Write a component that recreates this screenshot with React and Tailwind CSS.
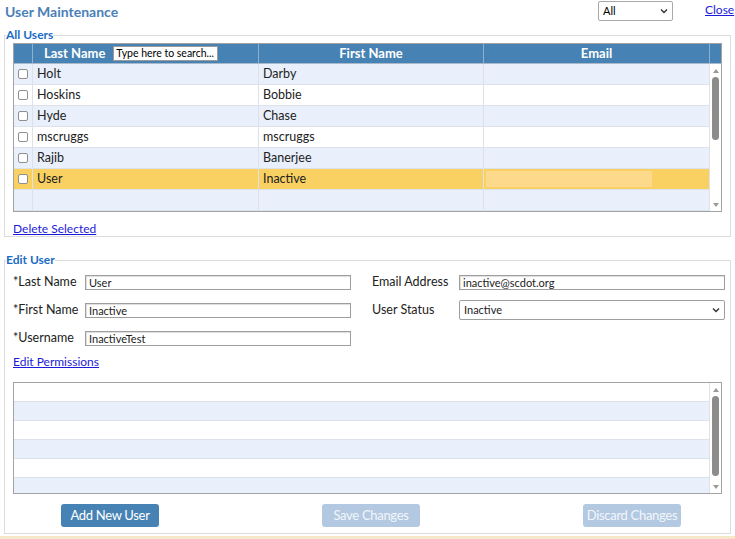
import React from "react";

const users = [
  { last: "Holt", first: "Darby" },
  { last: "Hoskins", first: "Bobbie" },
  { last: "Hyde", first: "Chase" },
  { last: "mscruggs", first: "mscruggs" },
  { last: "Rajib", first: "Banerjee" },
  { last: "User", first: "Inactive", selected: true },
  { last: "", first: "", empty: true },
];

function Scrollbar({ thumbTop, thumbHeight }) {
  return (
    <div className="w-[12px] flex flex-col items-center bg-white border-l border-[#e2e2e2]">
      <svg width="8" height="6" viewBox="0 0 8 6" className="mt-[4px]">
        <path d="M4 1 L7 5 L1 5 Z" fill="#9a9a9a" />
      </svg>
      <div className={`w-[7px] rounded-[4px] bg-[#8c8c8c] ${thumbTop} ${thumbHeight}`} />
      <div className="flex-1" />
      <svg width="8" height="6" viewBox="0 0 8 6" className="mb-[3px]">
        <path d="M1 1 L7 1 L4 5 Z" fill="#9a9a9a" />
      </svg>
    </div>
  );
}

function Checkbox() {
  return <div className="w-[10px] h-[10px] rounded-[2px] border border-[#8f8f8f] bg-white" />;
}

function TextBox({ value }) {
  return (
    <div className="w-[266px] h-[15px] border border-[#9e9e9e] shadow-[inset_1px_1px_1px_#ddd] text-[11px] flex items-center px-[3px] leading-none whitespace-nowrap">
      {value}
    </div>
  );
}

export default function App() {
  return (
    <div className="w-[735px] h-[539px] bg-white relative font-['Lato','Liberation_Sans',sans-serif] text-[#222] overflow-hidden">
      {/* top bar */}
      <div className="flex items-start h-[26px]">
        <h1 className="ml-[5px] mt-[1px] text-[14px] font-bold text-[#4a7fb8]">User Maintenance</h1>
        <div className="flex-1" />
        <div className="mt-[1px] w-[75px] h-[20px] border border-[#a9a9a9] rounded-[2px] flex items-center justify-between px-[4px] text-[11px] text-black bg-white">
          <span>All</span>
          <svg width="8" height="6" viewBox="0 0 8 6"><path d="M1 1.5 L4 4.5 L7 1.5" stroke="#333" strokeWidth="1.4" fill="none" /></svg>
        </div>
        <a href="#" className="ml-[32px] mr-[4px] w-[26px] mt-[1px] text-[12px] text-[#1b1bd8] underline">Close</a>
      </div>

      {/* All Users */}
      <fieldset className="mx-[4px] w-[727px] h-[209px] border border-[#dcdcdc] mt-[2px]">
        <legend className="ml-[1px] text-[12px] font-bold text-[#1a6cc6] leading-[14px]">All Users</legend>
        <div className="ml-[8px] mt-[1px] w-[709px] border border-[#a3a3a3]">
          <div className="flex h-[20px] bg-[#4682b4] text-white text-[13px] font-bold border-b border-[#a9b9c9]">
            <div className="w-[19px] border-r border-[#8fb0cf]" />
            <div className="w-[226px] border-r border-[#8fb0cf] flex items-center">
              <span className="ml-[11px] whitespace-nowrap">Last Name</span>
              <div className="ml-[8px] w-[105px] h-[15px] bg-white border border-[#9a9a9a] text-[10.5px] font-normal text-black flex items-center px-[2px] leading-none whitespace-nowrap overflow-hidden">Type here to search...</div>
            </div>
            <div className="w-[225px] border-r border-[#8fb0cf] flex items-center justify-center">First Name</div>
            <div className="w-[226px] border-r border-[#8fb0cf] flex items-center justify-center">Email</div>
            <div className="flex-1" />
          </div>
          <div className="flex">
            <div className="flex-1">
              {users.map((u, i) => (
                <div
                  key={i}
                  className={`flex h-[21px] text-[12.5px] border-b border-[#dde2ea] ${
                    u.selected ? "bg-[#f9d162]" : i % 2 === 0 ? "bg-[#e9f0fb]" : "bg-white"
                  }`}
                >
                  <div className="w-[19px] border-r border-[#dde2ea] flex items-center justify-center">
                    {!u.empty && <Checkbox />}
                  </div>
                  <div className="w-[226px] border-r border-[#dde2ea] flex items-center pl-[4px] pt-[1px]">{u.last}</div>
                  <div className="w-[225px] border-r border-[#dde2ea] flex items-center pl-[4px] pt-[1px]">{u.first}</div>
                  <div className="flex-1 flex items-center pl-[2px]">
                    {u.selected && <div className="w-[166px] h-[16px] bg-[#fdd98c]" />}
                  </div>
                </div>
              ))}
            </div>
            <Scrollbar thumbTop="mt-[3px]" thumbHeight="h-[63px]" />
          </div>
        </div>
        <a href="#" className="block ml-[8px] mt-[8px] text-[12px] text-[#1b1bd8] underline">Delete Selected</a>
      </fieldset>

      {/* Edit User */}
      <fieldset className="mx-[4px] mt-[16px] w-[727px] h-[281px] border border-[#dcdcdc]">
        <legend className="ml-[1px] text-[12px] font-bold text-[#1a6cc6] leading-[14px]">Edit User</legend>
        <div className="flex mt-[8px] text-[12.5px]">
          <div className="w-[367px] pl-[8px] flex flex-col gap-[13px]">
            <div className="flex items-center h-[15px]">
              <span className="w-[72px]">*Last Name</span>
              <TextBox value="User" />
            </div>
            <div className="flex items-center h-[15px]">
              <span className="w-[72px]">*First Name</span>
              <TextBox value="Inactive" />
            </div>
            <div className="flex items-center h-[15px]">
              <span className="w-[72px]">*Username</span>
              <TextBox value="InactiveTest" />
            </div>
          </div>
          <div className="flex-1 flex flex-col gap-[10px]">
            <div className="flex items-center h-[15px]">
              <span className="w-[87px]">Email Address</span>
              <TextBox value="inactive@scdot.org" />
            </div>
            <div className="flex items-center h-[20px]">
              <span className="w-[87px]">User Status</span>
              <div className="w-[266px] h-[20px] border border-[#9e9e9e] rounded-[2px] text-[11px] flex items-center justify-between px-[4px]">
                <span>Inactive</span>
                <svg width="8" height="6" viewBox="0 0 8 6"><path d="M1 1.5 L4 4.5 L7 1.5" stroke="#333" strokeWidth="1.4" fill="none" /></svg>
              </div>
            </div>
          </div>
        </div>
        <a href="#" className="block ml-[8px] mt-[7px] text-[12px] text-[#1b1bd8] underline">Edit Permissions</a>

        <div className="ml-[8px] mt-[11px] w-[709px] h-[112px] border border-[#a3a3a3] flex overflow-hidden">
          <div className="flex-1">
            {[0, 1, 2, 3, 4, 5].map((i) => (
              <div
                key={i}
                className={`h-[19px] border-b border-[#dde2ea] ${i % 2 === 0 ? "bg-white" : "bg-[#e9f0fb]"}`}
              />
            ))}
          </div>
          <Scrollbar thumbTop="mt-[3px]" thumbHeight="h-[80px]" />
        </div>

        <div className="flex mt-[10px] text-[13px] tracking-[-0.3px] whitespace-nowrap">
          <button className="ml-[56px] w-[98px] h-[23px] rounded-[3px] bg-[#4682b4] text-white">Add New User</button>
          <button className="ml-[163px] w-[98px] h-[23px] rounded-[3px] bg-[#b3c9e1] text-[#f2f6fb]">Save Changes</button>
          <button className="ml-[163px] w-[98px] h-[23px] rounded-[3px] bg-[#b3c9e1] text-[#f2f6fb]">Discard Changes</button>
        </div>
      </fieldset>

      <div className="absolute left-0 right-0 bottom-0 h-[3px] bg-[#f7e7c9]" />
    </div>
  );
}
